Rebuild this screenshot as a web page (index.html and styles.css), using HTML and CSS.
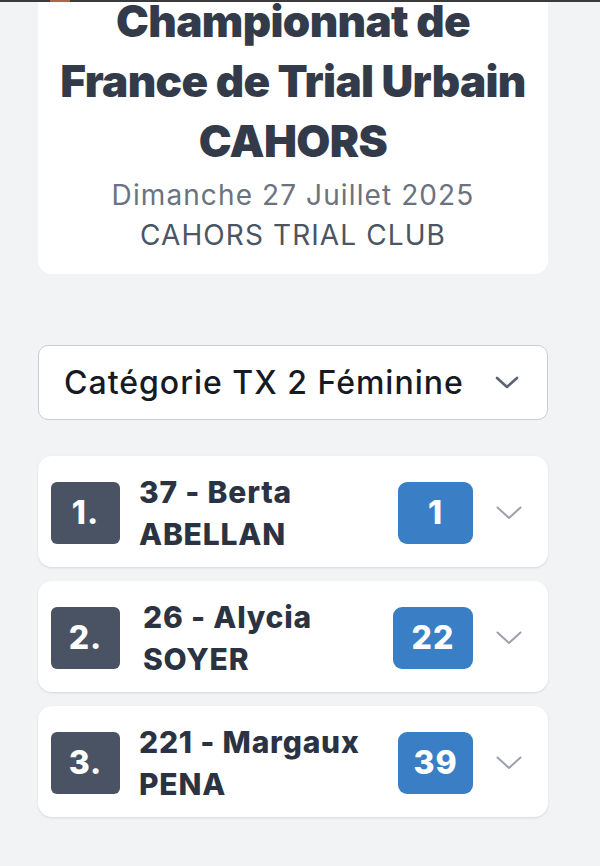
FILE: index.html
```html
<!DOCTYPE html>
<html lang="fr">
<head>
<meta charset="utf-8">
<title>Championnat de France de Trial Urbain CAHORS</title>
<link rel="stylesheet" href="styles.css">
</head>
<body>
<div class="topbar"><span class="topbar-accent"></span></div>
<main class="page">
  <header class="event-card">
    <h1 class="event-title">Championnat de<br>France de Trial Urbain<br>CAHORS</h1>
    <p class="event-date">Dimanche 27 Juillet 2025</p>
    <p class="event-club">CAHORS TRIAL CLUB</p>
  </header>

  <div class="select">
    <span class="select-label">Catégorie TX 2 Féminine</span>
    <svg class="select-chevron" viewBox="0 0 24 14" width="24" height="14"><path d="M2 2 L12 11 L22 2" fill="none" stroke="currentColor" stroke-width="2.6" stroke-linecap="round" stroke-linejoin="round"/></svg>
  </div>

  <ul class="results">
    <li class="result">
      <span class="rank">1.</span>
      <div class="rider"><span>37 - Berta</span><span>ABELLAN</span></div>
      <span class="score">1</span>
      <svg class="chevron" viewBox="0 0 26 14" width="26" height="14"><path d="M1.5 1.5 L13 12 L24.5 1.5" fill="none" stroke="currentColor" stroke-width="2" stroke-linecap="round" stroke-linejoin="round"/></svg>
    </li>
    <li class="result">
      <span class="rank">2.</span>
      <div class="rider rider-wide"><span>26 - Alycia</span><span>SOYER</span></div>
      <span class="score score-wide">22</span>
      <svg class="chevron" viewBox="0 0 26 14" width="26" height="14"><path d="M1.5 1.5 L13 12 L24.5 1.5" fill="none" stroke="currentColor" stroke-width="2" stroke-linecap="round" stroke-linejoin="round"/></svg>
    </li>
    <li class="result">
      <span class="rank">3.</span>
      <div class="rider"><span>221 - Margaux</span><span>PENA</span></div>
      <span class="score">39</span>
      <svg class="chevron" viewBox="0 0 26 14" width="26" height="14"><path d="M1.5 1.5 L13 12 L24.5 1.5" fill="none" stroke="currentColor" stroke-width="2" stroke-linecap="round" stroke-linejoin="round"/></svg>
    </li>
  </ul>
</main>
</body>
</html>
```

FILE: styles.css
```css
* { box-sizing: border-box; }

html, body {
  margin: 0;
  padding: 0;
}

body {
  background: #f2f3f5;
  font-family: Inter, "Noto Sans", "Liberation Sans", sans-serif;
  color: #2d3748;
  width: 600px;
  height: 866px;
  overflow: hidden;
  position: relative;
}

.topbar {
  position: absolute;
  top: 0;
  left: 0;
  right: 0;
  height: 2px;
  background: #3a3a3c;
  z-index: 2;
}

.topbar-accent {
  position: absolute;
  left: 50px;
  top: 0;
  width: 20px;
  height: 2px;
  background: #b0664a;
}

.page {
  display: flex;
  flex-direction: column;
  width: 510px;
  margin-left: 38px;
}

.event-card {
  background: #ffffff;
  border-radius: 0 0 14px 14px;
  margin-top: -9px;
  padding: 0 6px 19px;
  text-align: center;
}

.event-title {
  margin: 0;
  font-size: 44px;
  line-height: 60px;
  font-weight: 900;
  color: #333b4b;
  letter-spacing: -0.65px;
  white-space: nowrap;
}

.event-date,
.event-club {
  margin: 0;
  font-size: 28px;
  line-height: 40px;
  font-weight: 400;
  letter-spacing: 1.1px;
}

.event-date {
  color: #6b7280;
  margin-top: 4px;
}

.event-club {
  color: #4b5563;
}

.select {
  margin-top: 71px;
  height: 75px;
  background: #ffffff;
  border: 1.5px solid #c9cdd4;
  border-radius: 10px;
  display: flex;
  align-items: center;
  justify-content: space-between;
  padding: 0 28px 0 25px;
}

.select-label {
  font-size: 32px;
  font-weight: 500;
  letter-spacing: 1px;
  color: #161a23;
}

.select-chevron {
  color: #5b6270;
}

.results {
  list-style: none;
  margin: 36px 0 0;
  padding: 0;
  display: flex;
  flex-direction: column;
  gap: 14px;
}

.result {
  height: 111px;
  background: #ffffff;
  border-radius: 14px;
  box-shadow: 0 1px 3px rgba(0, 0, 0, 0.08), 0 1px 2px rgba(0, 0, 0, 0.04);
  display: flex;
  align-items: center;
  padding: 2px 26px 0 13px;
}

.rank {
  width: 69px;
  height: 62px;
  border-radius: 6px;
  background: #4a5363;
  color: #ffffff;
  font-weight: 800;
  font-size: 32px;
  letter-spacing: 1px;
  display: flex;
  align-items: center;
  justify-content: center;
  flex: none;
}

.rider {
  flex: 1;
  display: flex;
  flex-direction: column;
  margin-left: 19px;
  font-size: 30px;
  font-weight: 800;
  line-height: 42px;
  letter-spacing: 0.8px;
  color: #2b3343;
}

.rider-wide {
  margin-left: 23px;
}

.score {
  width: 75px;
  height: 62px;
  border-radius: 9px;
  background: #3a7fc5;
  color: #ffffff;
  font-weight: 800;
  font-size: 32px;
  letter-spacing: 1px;
  display: flex;
  align-items: center;
  justify-content: center;
  flex: none;
}

.score-wide {
  width: 80px;
}

.chevron {
  margin-left: 23px;
  color: #9aa1ac;
  flex: none;
}
```
